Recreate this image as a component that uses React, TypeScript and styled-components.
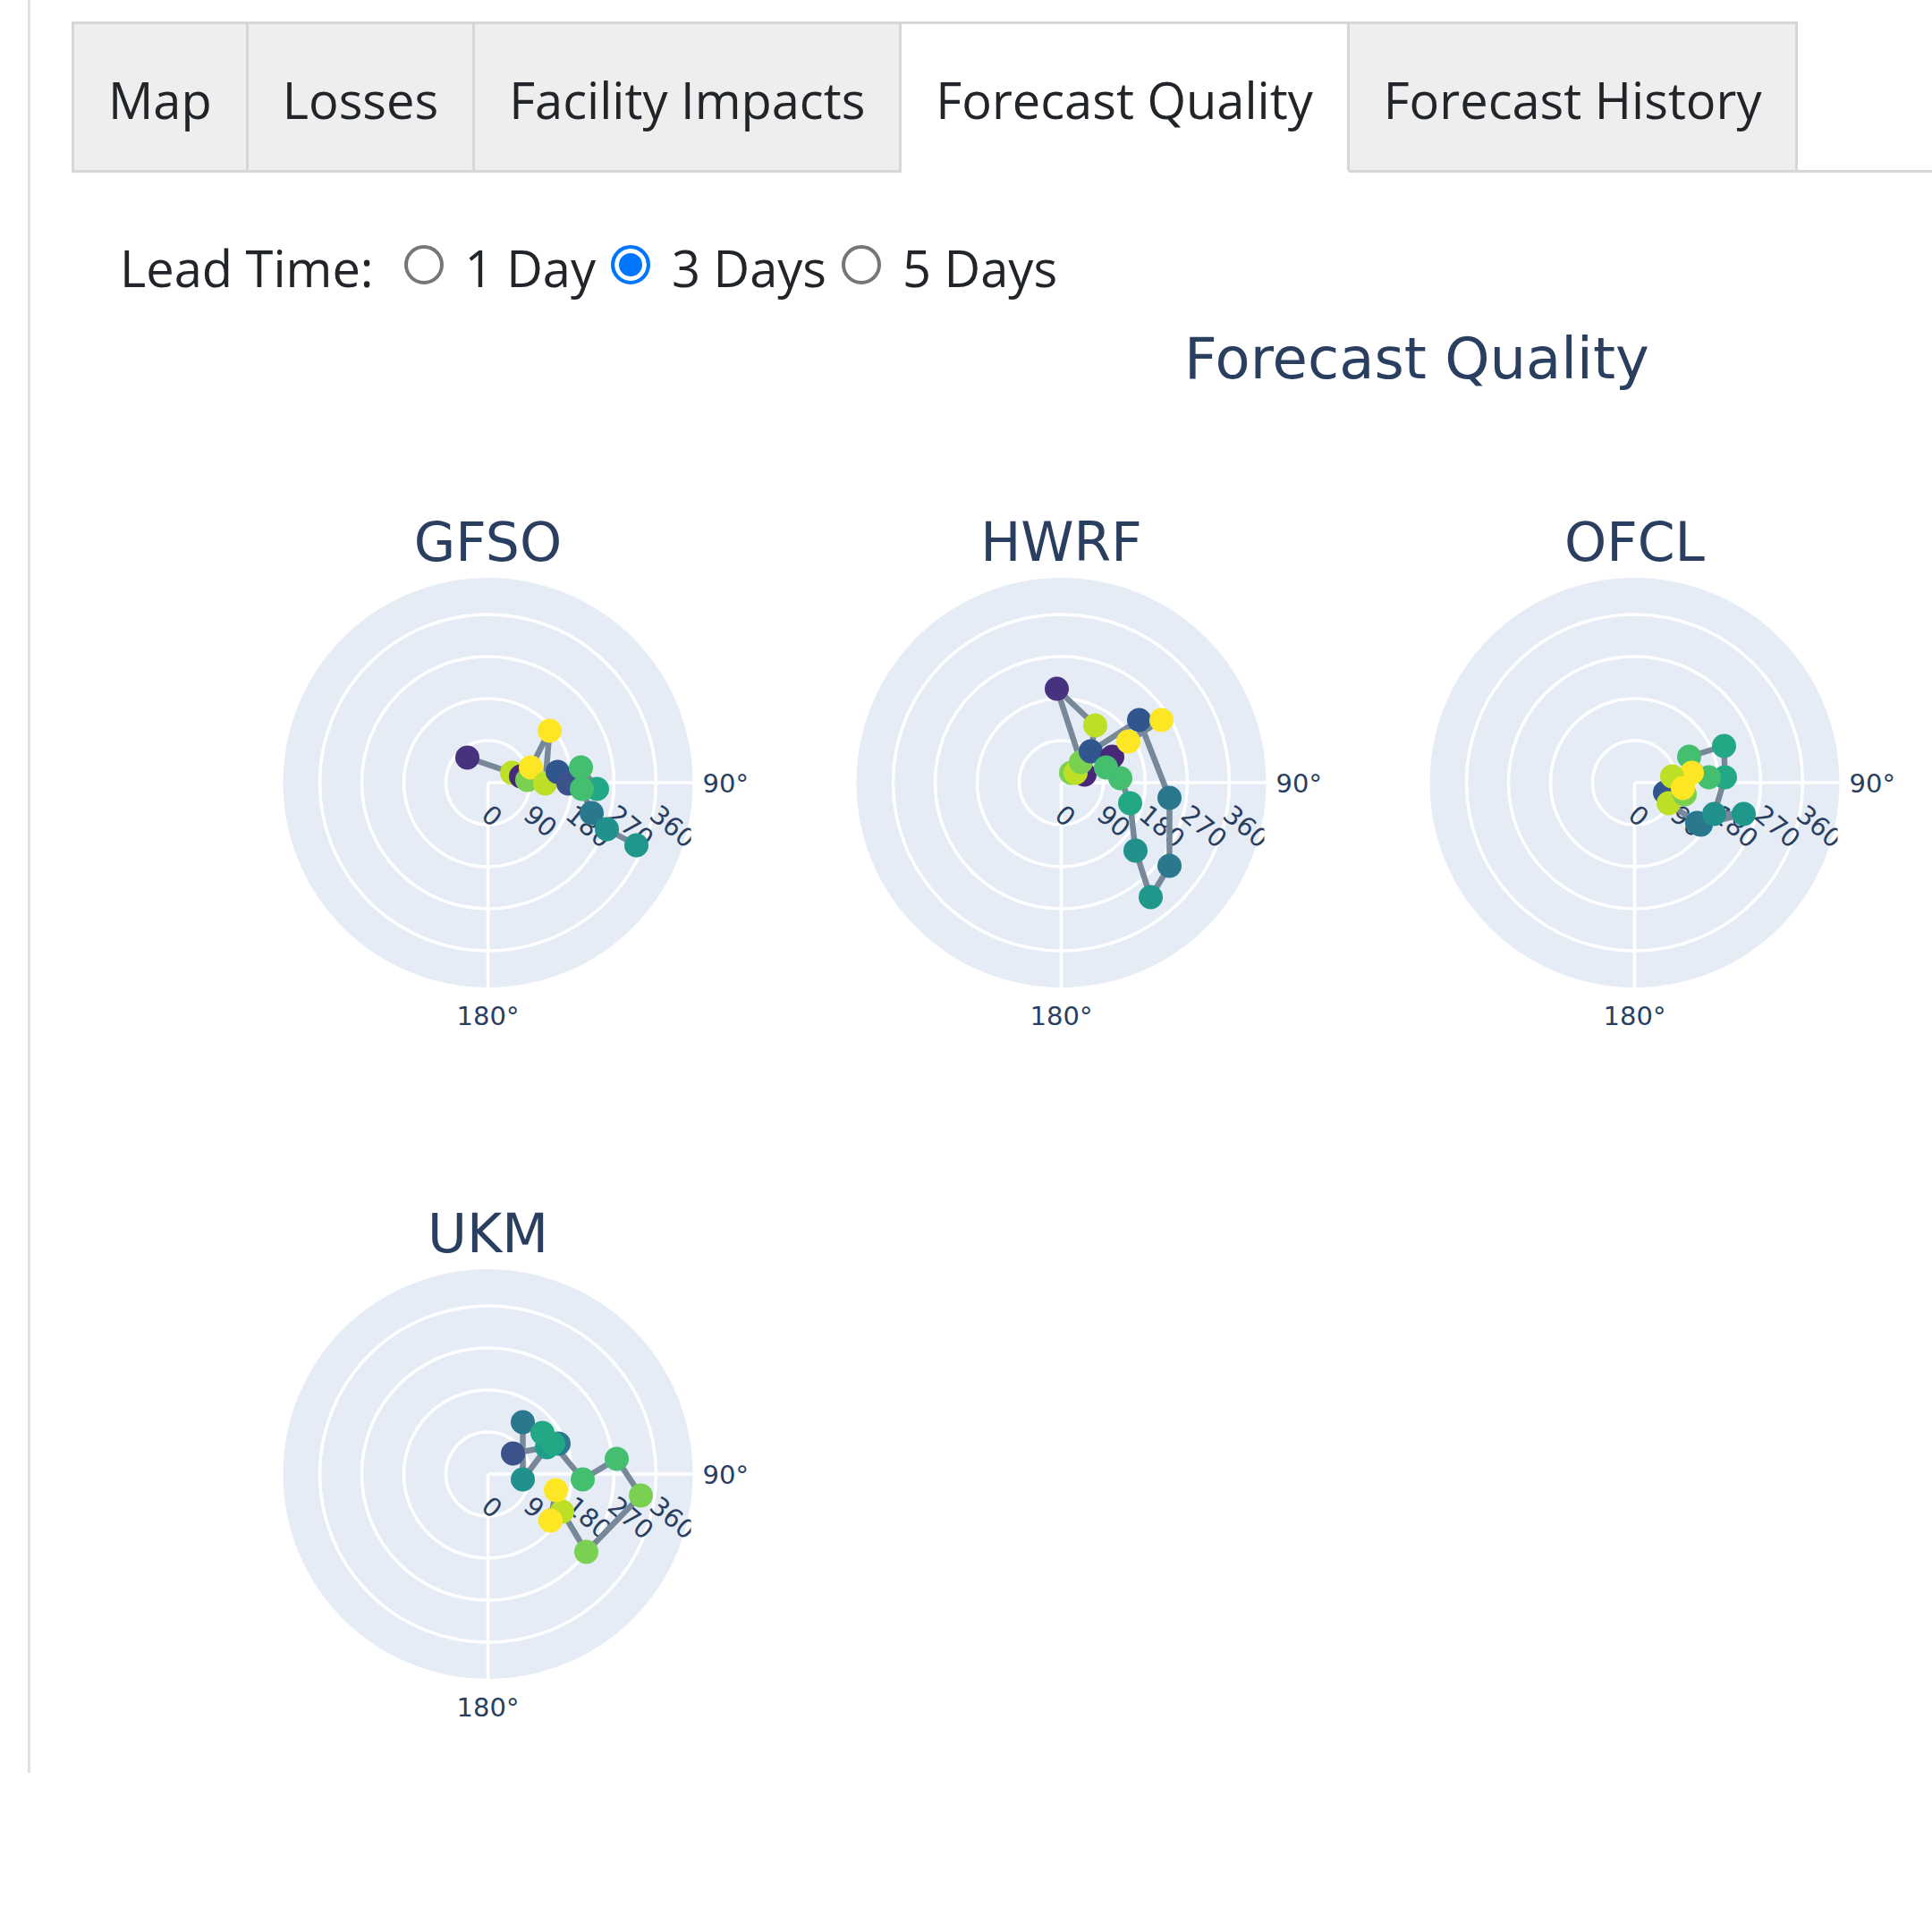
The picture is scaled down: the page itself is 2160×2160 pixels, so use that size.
import { useState } from "react";
import styled, { createGlobalStyle } from "styled-components";

const GlobalStyle = createGlobalStyle`
  html, body {
    margin: 0;
    background: #ffffff;
  }
  body {
    font-family: "Open Sans", "Noto Sans", "Liberation Sans", sans-serif;
    color: #212529;
  }
`;

const TABS = ["Map", "Losses", "Facility Impacts", "Forecast Quality", "Forecast History"];
const LEAD_TIMES = ["1 Day", "3 Days", "5 Days"];

// viridis shades used by the markers
const V = {
  purple: "#46327e",
  darkPurple: "#482878",
  blue: "#3b528b",
  blue2: "#31568d",
  teal: "#2a788e",
  teal2: "#21918c",
  teal3: "#1f978b",
  tealGreen: "#22a884",
  seaGreen: "#1f9e89",
  green: "#44bf70",
  lightGreen: "#7ad151",
  lime: "#bddf26",
  yellow: "#fde725",
};

// [dx, dy, colour] in px from the pole, in the order the trace is drawn
type Point = [number, number, string];
type Subplot = { name: string; points: Point[] };

const SUBPLOTS: Subplot[] = [
  {
    name: "GFSO",
    points: [
      [-23, -28, V.purple],
      [27, -11, V.lime],
      [37, -7, V.darkPurple],
      [44, -3, V.lightGreen],
      [48, -17, V.yellow],
      [69, -58, V.yellow],
      [64, 1, V.lime],
      [78, -12, V.blue2],
      [90, 1, V.blue],
      [104, -17, V.green],
      [122, 7, V.tealGreen],
      [105, 7, V.green],
      [116, 34, V.teal],
      [133, 52, V.teal2],
      [166, 70, V.teal3],
    ],
  },
  {
    name: "HWRF",
    points: [
      [26, -9, V.darkPurple],
      [11, -11, V.lightGreen],
      [16, -11, V.lime],
      [22, -23, V.lightGreen],
      [-5, -105, V.purple],
      [38, -64, V.lime],
      [33, -35, V.blue2],
      [87, -70, V.blue2],
      [121, 17, V.teal],
      [121, 93, V.teal],
      [100, 128, V.teal3],
      [83, 76, V.teal2],
      [77, 23, V.tealGreen],
      [66, -5, V.green],
      [57, -29, V.darkPurple],
      [50, -17, V.green],
      [75, -46, V.yellow],
      [112, -70, V.yellow],
    ],
  },
  {
    name: "OFCL",
    points: [
      [34, 11, V.blue2],
      [38, 23, V.lime],
      [70, 45, V.teal],
      [74, 47, V.teal],
      [122, 35, V.teal3],
      [89, 35, V.teal2],
      [101, -6, V.tealGreen],
      [100, -41, V.tealGreen],
      [61, -29, V.green],
      [83, -6, V.green],
      [64, -11, V.yellow],
      [42, -7, V.lime],
      [56, 13, V.lightGreen],
      [54, 6, V.yellow],
    ],
  },
  {
    name: "UKM",
    points: [
      [28, -23, V.blue],
      [66, -30, V.seaGreen],
      [39, 6, V.teal2],
      [39, -58, V.teal],
      [61, -46, V.tealGreen],
      [79, -34, V.teal],
      [73, -34, V.tealGreen],
      [106, 6, V.green],
      [144, -17, V.green],
      [171, 24, V.lightGreen],
      [110, 87, V.lightGreen],
      [83, 42, V.lime],
      [70, 52, V.yellow],
      [76, 18, V.yellow],
    ],
  },
];

const CX = 320.5;
const CY = 233;
const R = 229;
const RING_STEP = 47;
const RADIAL_TICKS = ["0", "90", "180", "270", "360"];

const App = () => {
  const [tab, setTab] = useState("Forecast Quality");
  const [lead, setLead] = useState("3 Days");

  return (
    <>
      <GlobalStyle />
      <Page>
        <TabBar>
          {TABS.map((t, i) => (
            <Tab key={t} $first={i === 0} $selected={t === tab} onClick={() => setTab(t)}>
              {t}
            </Tab>
          ))}
          <TabFiller />
        </TabBar>

        <LeadRow>
          <LeadLabel>Lead Time:</LeadLabel>
          {LEAD_TIMES.map((lt) => (
            <Option key={lt}>
              <Radio name="lead-time" checked={lead === lt} onChange={() => setLead(lt)} />
              {lt}
            </Option>
          ))}
        </LeadRow>

        <Figure>
          <FigureTitle>Forecast Quality</FigureTitle>
          <SubplotGrid>
            {SUBPLOTS.map((s) => (
              <SubplotCell key={s.name}>
                <SubplotTitle>{s.name}</SubplotTitle>
                <PolarChart id={s.name} points={s.points} />
              </SubplotCell>
            ))}
          </SubplotGrid>
        </Figure>
      </Page>
    </>
  );
};

const PolarChart = ({ id, points }: { id: string; points: Point[] }) => {
  const clipId = `radial-clip-${id}`;
  const path = points.map(([dx, dy]) => `${CX + dx},${CY + dy}`).join(" ");

  return (
    <ChartSvg width={641} height={567} viewBox="0 0 641 567">
      <defs>
        <clipPath id={clipId}>
          <rect x={0} y={0} width={CX + 227} height={567} />
        </clipPath>
      </defs>
      <circle cx={CX} cy={CY} r={R} fill="#e5ecf6" />
      {[1, 2, 3, 4].map((k) => (
        <circle key={k} cx={CX} cy={CY} r={k * RING_STEP} fill="none" stroke="#ffffff" strokeWidth={3.5} />
      ))}
      <line x1={CX} y1={CY} x2={CX + R} y2={CY} stroke="#ffffff" strokeWidth={3.5} />
      <line x1={CX} y1={CY} x2={CX} y2={CY + R} stroke="#ffffff" strokeWidth={3.5} />

      <g clipPath={`url(#${clipId})`}>
        {RADIAL_TICKS.map((t, i) => {
          const x = CX + i * RING_STEP - 9;
          const y = CY + 39;
          return (
            <TickLabel key={t} $size={29} x={x} y={y} transform={`rotate(40 ${x} ${y})`}>
              {t}
            </TickLabel>
          );
        })}
      </g>
      <TickLabel $size={29} x={CX + 240} y={CY + 10.5}>
        90°
      </TickLabel>
      <TickLabel $size={29} x={CX} y={CY + 271} textAnchor="middle">
        180°
      </TickLabel>

      <polyline points={path} fill="none" stroke="#778899" strokeWidth={6.5} strokeLinejoin="round" />
      {points.map(([dx, dy, c], i) => (
        <circle key={i} cx={CX + dx} cy={CY + dy} r={13.5} fill={c} />
      ))}
    </ChartSvg>
  );
};

export default App;

const Page = styled.div`
  box-sizing: border-box;
  height: 1982px;
  margin-left: 31px;
  border-left: 3px solid #d9e1e6;
  padding: 24px 0 0 46px;
`;

const TabBar = styled.div`
  display: flex;
`;

const Tab = styled.button<{ $selected?: boolean; $first?: boolean }>`
  font-family: inherit;
  font-size: 56px;
  line-height: 84px;
  color: #212529;
  padding: 42px 38px 37px;
  margin: 0;
  background: ${(p) => (p.$selected ? "#ffffff" : "#eeeeee")};
  border: 3px solid #d6d6d6;
  border-left: ${(p) => (p.$first ? "3px solid #d6d6d6" : "none")};
  border-bottom-color: ${(p) => (p.$selected ? "#ffffff" : "#d6d6d6")};
  white-space: nowrap;
  cursor: pointer;
`;

const TabFiller = styled.div`
  flex: 1;
  border-bottom: 3px solid #d6d6d6;
`;

const LeadRow = styled.div`
  display: flex;
  align-items: center;
  margin-top: 64px;
  padding-left: 54px;
  font-size: 56px;
  line-height: 84px;
`;

const LeadLabel = styled.span`
  margin-right: 34px;
`;

const Option = styled.label`
  display: inline-flex;
  align-items: center;
  gap: 24px;
  margin-right: 17px;
  cursor: pointer;
`;

const Radio = styled.input.attrs({ type: "radio" })`
  appearance: none;
  box-sizing: border-box;
  width: 44px;
  height: 44px;
  margin: 0 0 6px;
  border: 4px solid #767676;
  border-radius: 50%;
  background: #ffffff;
  cursor: pointer;

  &:checked {
    border-color: #0075ff;
    background: #0075ff;
    box-shadow: inset 0 0 0 5px #ffffff;
  }
`;

const Figure = styled.div`
  margin-top: 22px;
  font-family: "DejaVu Sans", Verdana, sans-serif;
  color: #2a3f5f;
`;

const FigureTitle = styled.div`
  font-size: 64px;
  line-height: 77px;
  padding-left: 1244px;
`;

const SubplotGrid = styled.div`
  display: grid;
  grid-template-columns: repeat(3, 641px);
  row-gap: 134px;
  margin-top: 130px;
  padding-left: 145px;
`;

const SubplotCell = styled.div`
  display: flex;
  flex-direction: column;
  align-items: center;
`;

const SubplotTitle = styled.div`
  font-size: 60px;
  line-height: 72px;
`;

const ChartSvg = styled.svg`
  display: block;
`;

const TickLabel = styled.text<{ $size: number }>`
  font-family: "DejaVu Sans", Verdana, sans-serif;
  font-size: ${(p) => p.$size}px;
  fill: #2a3f5f;
`;
